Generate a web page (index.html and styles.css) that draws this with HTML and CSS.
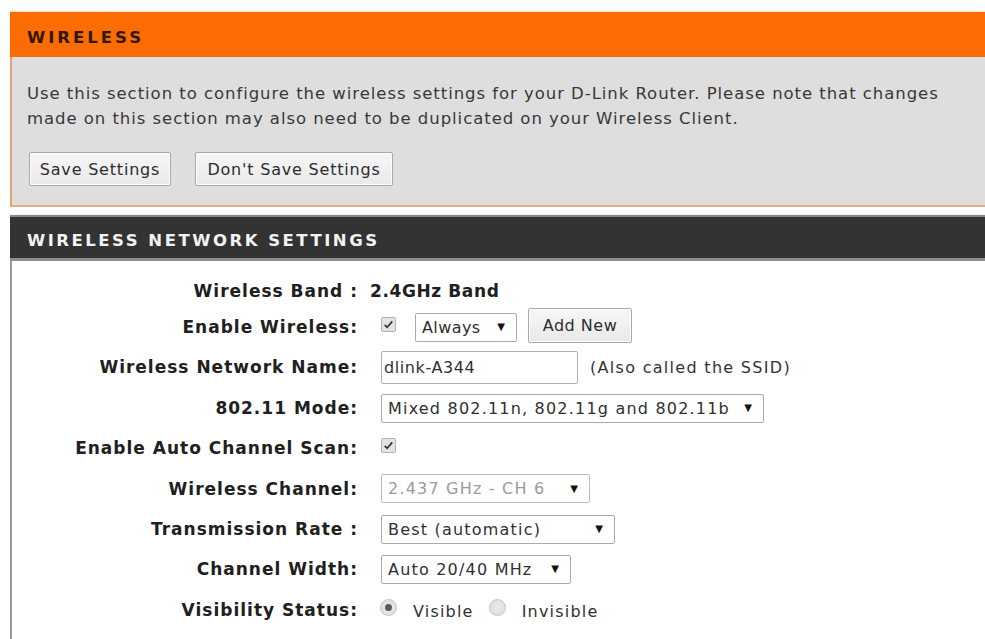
FILE: index.html
```html
<!DOCTYPE html>
<html lang="en">
<head>
<meta charset="utf-8">
<title>Wireless Settings</title>
<link rel="stylesheet" href="styles.css">
</head>
<body>
<div class="page">
  <section class="intro">
    <h2 class="intro-title">WIRELESS</h2>
    <div class="intro-body">
      <p class="intro-text">Use this section to configure the wireless settings for your D-Link Router. Please note that changes made on this section may also need to be duplicated on your Wireless Client.</p>
      <div class="actions">
        <button class="btn btn-save" type="button">Save Settings</button>
        <button class="btn btn-nosave" type="button">Don't Save Settings</button>
      </div>
    </div>
  </section>

  <section class="panel">
    <h2 class="panel-title">WIRELESS NETWORK SETTINGS</h2>
    <div class="form">
      <div class="lbl">Wireless Band :</div>
      <div class="val"><strong class="band">2.4GHz Band</strong></div>

      <div class="lbl">Enable Wireless:</div>
      <div class="val">
        <span class="check"><svg viewBox="0 0 16 16" width="11" height="11"><path d="M2.5 8.5 L6 12 L13.5 3.5" fill="none" stroke="#333" stroke-width="2.4"/></svg></span>
        <span class="sel sel-always">Always<i class="arrow">▼</i></span>
        <button class="btn btn-add" type="button">Add New</button>
      </div>

      <div class="lbl">Wireless Network Name:</div>
      <div class="val">
        <input class="txt" type="text" value="dlink-A344">
        <span class="note">(Also called the SSID)</span>
      </div>

      <div class="lbl">802.11 Mode:</div>
      <div class="val"><span class="sel sel-mode">Mixed 802.11n, 802.11g and 802.11b<i class="arrow">▼</i></span></div>

      <div class="lbl">Enable Auto Channel Scan:</div>
      <div class="val">
        <span class="check"><svg viewBox="0 0 16 16" width="11" height="11"><path d="M2.5 8.5 L6 12 L13.5 3.5" fill="none" stroke="#333" stroke-width="2.4"/></svg></span>
      </div>

      <div class="lbl">Wireless Channel:</div>
      <div class="val"><span class="sel sel-channel disabled">2.437 GHz - CH 6<i class="arrow">▼</i></span></div>

      <div class="lbl">Transmission Rate :</div>
      <div class="val"><span class="sel sel-rate">Best (automatic)<i class="arrow">▼</i></span></div>

      <div class="lbl">Channel Width:</div>
      <div class="val"><span class="sel sel-width">Auto 20/40 MHz<i class="arrow">▼</i></span></div>

      <div class="lbl">Visibility Status:</div>
      <div class="val">
        <span class="radio on"></span><span class="radio-text">Visible</span>
        <span class="radio"></span><span class="radio-text">Invisible</span>
      </div>
    </div>
  </section>
</div>
</body>
</html>
```

FILE: styles.css
```css
html, body {
  margin: 0;
  padding: 0;
  background: #ffffff;
}

body {
  font-family: "DejaVu Sans", Verdana, sans-serif;
  color: #333333;
  width: 985px;
  height: 639px;
  overflow: hidden;
}

.page {
  padding: 11px 0 0 10px;
}

/* orange intro block */
.intro {
  margin: 0;
  border-top: 1px solid #fde2c8;
}

.intro-title {
  margin: 0;
  height: 45px;
  box-sizing: border-box;
  padding: 6px 0 0 17px;
  display: flex;
  align-items: center;
  background: #fb6d02;
  color: #351600;
  font-size: 16.5px;
  font-weight: bold;
  letter-spacing: 3px;
}

.intro-body {
  background: #dedede;
  border-left: 2px solid #eaa26a;
  border-bottom: 2px solid #e2ad82;
  padding: 24px 0 19px 15px;
}

.intro-text {
  margin: 0;
  font-size: 16.5px;
  line-height: 25px;
  color: #383838;
  letter-spacing: 0.95px;
}

.actions {
  display: flex;
  gap: 24px;
  margin-top: 21px;
  padding-left: 2px;
}

.btn {
  font-family: "DejaVu Sans", Verdana, sans-serif;
  font-size: 16px;
  letter-spacing: 0.8px;
  color: #2d2d2d;
  background: linear-gradient(#f7f7f7, #e9e9e9);
  border: 1px solid #a9a9a9;
  border-radius: 2px;
  box-shadow: inset 0 0 0 1px #fdfdfd;
  padding: 0;
  height: 34px;
}

.btn-save { width: 142px; }
.btn-nosave { width: 198px; }

/* dark settings panel */
.panel {
  margin-top: 7px;
  border-top: 1px solid #fdf3e6;
}

.panel-title {
  margin: 0;
  height: 35px;
  box-sizing: content-box;
  padding: 6px 0 0 17px;
  display: flex;
  align-items: center;
  background: #333333;
  border-top: 2px solid #8a8a8a;
  border-bottom: 3px solid #8d8d8d;
  color: #f2f2f2;
  font-size: 16.5px;
  font-weight: bold;
  letter-spacing: 2.5px;
}

.form {
  border-left: 2px solid #9a9a9a;
  display: grid;
  grid-template-columns: 346px 1fr;
  grid-template-rows: 34px 38px 42px 40px 40px 41px 40px 40px 41px;
  align-items: center;
  padding: 13px 0 10px;
}

.lbl {
  text-align: right;
  font-weight: bold;
  font-size: 17px;
  letter-spacing: 1px;
  color: #202020;
  white-space: nowrap;
}

.val {
  display: flex;
  align-items: center;
  padding-left: 22px;
  font-size: 16px;
  letter-spacing: 1.2px;
  white-space: nowrap;
}

.band {
  font-weight: bold;
  font-size: 17px;
  letter-spacing: 0.6px;
  color: #202020;
  margin-left: -10px;
}

.check {
  width: 15px;
  height: 15px;
  border: 1px solid #b3b3b3;
  border-radius: 2px;
  background: #e4e4e4;
  display: inline-flex;
  align-items: center;
  justify-content: center;
  box-sizing: border-box;
  margin-top: -6px;
  margin-left: 1px;
}

.sel {
  position: relative;
  display: inline-flex;
  align-items: center;
  box-sizing: border-box;
  border: 1px solid #ababab;
  border-radius: 2px;
  background: #ffffff;
  color: #303030;
  padding-left: 6px;
  height: 29px;
}

.sel.disabled {
  color: #9a9a9a;
  border-color: #bdbdbd;
}

.arrow {
  position: absolute;
  right: 11px;
  top: 50%;
  transform: translateY(-55%);
  font-style: normal;
  font-size: 10px;
  letter-spacing: 0;
  color: #111111;
}

.sel-always { width: 102px; margin-left: 19px; letter-spacing: 0.4px; }
.sel-mode { width: 383px; margin-left: 1px; }
.sel-channel { width: 209px; margin-left: 1px; }
.sel-rate { width: 234px; margin-left: 1px; }
.sel-width { width: 190px; margin-left: 1px; }

.btn-add {
  height: 35px;
  width: 104px;
  margin-left: 11px;
  margin-top: -4px;
  letter-spacing: 0.5px;
}

.txt {
  font-family: "DejaVu Sans", Verdana, sans-serif;
  font-size: 16px;
  letter-spacing: 0.6px;
  color: #303030;
  width: 197px;
  height: 33px;
  box-sizing: border-box;
  border: 1px solid #b0b0b0;
  border-radius: 2px;
  padding: 0 2px;
  margin: 0 0 0 1px;
}

.note {
  margin-left: 12px;
  color: #333333;
  letter-spacing: 1.3px;
}

.radio {
  width: 17px;
  height: 17px;
  border-radius: 50%;
  border: 1px solid #c4c4c4;
  background: radial-gradient(circle, #ececec 0, #dadada 100%);
  box-sizing: border-box;
  display: inline-flex;
  align-items: center;
  justify-content: center;
  margin-top: -4px;
}

.radio.on::after {
  content: "";
  width: 7px;
  height: 7px;
  border-radius: 50%;
  background: #5a5a5a;
}

.radio-text {
  margin-left: 16px;
  margin-right: 15px;
  color: #333333;
  margin-top: 4px;
}
```
